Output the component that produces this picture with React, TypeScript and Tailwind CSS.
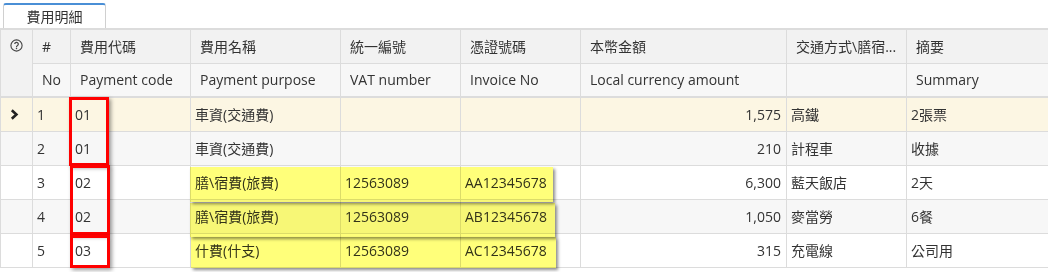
import React from "react";

const COLS = [32, 38, 120, 150, 120, 120, 206, 120, 142];

const ROWS = [
  { no: "1", code: "01", name: "車資(交通費)", vat: "", inv: "", amt: "1,575", way: "高鐵", note: "2張票" },
  { no: "2", code: "01", name: "車資(交通費)", vat: "", inv: "", amt: "210", way: "計程車", note: "收據" },
  { no: "3", code: "02", name: "膳\\宿費(旅費)", vat: "12563089", inv: "AA12345678", amt: "6,300", way: "藍天飯店", note: "2天" },
  { no: "4", code: "02", name: "膳\\宿費(旅費)", vat: "12563089", inv: "AB12345678", amt: "1,050", way: "麥當勞", note: "6餐" },
  { no: "5", code: "03", name: "什費(什支)", vat: "12563089", inv: "AC12345678", amt: "315", way: "充電線", note: "公司用" },
];

const head = "h-[34px] px-[9px] border border-[#dcdcdc] whitespace-nowrap overflow-hidden font-normal";
const cell = "h-[34px] px-[4px] border border-[#dcdcdc] whitespace-nowrap overflow-hidden";

export default function App() {
  return (
    <div
      className="w-[1048px] h-[272px] bg-white text-[14px] text-[#333] overflow-hidden"
      style={{ fontFamily: '"Open Sans", "Noto Sans CJK TC", sans-serif' }}
    >
      <div className="flex pl-[3px] pt-[3px]">
        <div className="w-[103px] h-[25px] rounded-t-[3px] border-t-2 border-x border-t-[#4a8fd6] border-x-[#d0d0d0] flex items-center justify-center text-[14px] text-[#333] bg-white">
          費用明細
        </div>
      </div>

      <div className="relative">
        <table className="table-fixed border-collapse w-[1047px] border-t-2 border-t-[#dcdcdc]">
          <colgroup>
            {COLS.map((w, i) => (
              <col key={i} style={{ width: w }} />
            ))}
          </colgroup>
          <thead>
            <tr className="bg-[#f2f2f2] text-left">
              <th rowSpan={2} className="border border-[#dcdcdc] align-top pt-[9px] font-normal bg-[#f2f2f2]">
                <div className="flex justify-center">
                  <svg width="13" height="13" viewBox="0 0 13 13">
                    <circle cx="6.5" cy="6.5" r="5.6" fill="none" stroke="#444" strokeWidth="1.1" />
                    <path d="M4.7 5.1a1.8 1.8 0 1 1 2.6 1.6c-.6.3-.8.6-.8 1.2v.3" fill="none" stroke="#444" strokeWidth="1.2" />
                    <circle cx="6.5" cy="9.6" r="0.75" fill="#444" />
                  </svg>
                </div>
              </th>
              <th className={head}>#</th>
              <th className={head}>費用代碼</th>
              <th className={head}>費用名稱</th>
              <th className={head}>統一編號</th>
              <th className={head}>憑證號碼</th>
              <th className={head}>本幣金額</th>
              <th className={head}>交通方式\膳宿...</th>
              <th className={head}>摘要</th>
            </tr>
            <tr className="bg-[#f7f7f7] text-left border-b-2 border-b-[#dcdcdc]">
              <th className={head}>No</th>
              <th className={head}>Payment code</th>
              <th className={head}>Payment purpose</th>
              <th className={head}>VAT number</th>
              <th className={head}>Invoice No</th>
              <th className={head}>Local currency amount</th>
              <th className={head}></th>
              <th className={head}>Summary</th>
            </tr>
          </thead>
          <tbody>
            {ROWS.map((r, i) => (
              <tr
                key={r.no}
                className={i === 0 ? "bg-[#fcf6e3]" : i % 2 === 1 ? "bg-[#f7f7f7]" : "bg-white"}
              >
                <td className="h-[34px] border border-[#dcdcdc]">
                  {i === 0 && (
                    <div className="flex justify-center pr-[4px]">
                      <svg width="9" height="11" viewBox="0 0 9 11">
                        <path d="M1.8 1.3 6.4 5.5 1.8 9.7" fill="none" stroke="#222" strokeWidth="2.6" />
                      </svg>
                    </div>
                  )}
                </td>
                <td className={cell}>{r.no}</td>
                <td className={cell}>{r.code}</td>
                <td className={cell}>{r.name}</td>
                <td className={cell}>{r.vat}</td>
                <td className={cell}>{r.inv}</td>
                <td className={`${cell} text-right !pr-[5px]`}>{r.amt}</td>
                <td className={cell}>{r.way}</td>
                <td className={cell}>{r.note}</td>
              </tr>
            ))}
          </tbody>
        </table>

        {/* highlighter annotations */}
        <div className="absolute left-[190px] top-[139px] w-[363px] h-[35px] bg-[#ffff7a] mix-blend-multiply shadow-[2px_2px_3px_rgba(0,0,0,0.45)]" />
        <div className="absolute left-[190px] top-[175px] w-[365px] h-[34px] bg-[#ffff7a] mix-blend-multiply shadow-[2px_2px_3px_rgba(0,0,0,0.45)]" />
        <div className="absolute left-[191px] top-[209px] w-[365px] h-[31px] bg-[#ffff7a] mix-blend-multiply shadow-[2px_2px_3px_rgba(0,0,0,0.45)]" />

        {/* red boxes */}
        <div className="absolute left-[69px] top-[69px] w-[40px] h-[69px] border-[3px] border-[#ff0000] shadow-[2px_2px_4px_rgba(0,0,0,0.4)]" />
        <div className="absolute left-[70px] top-[137px] w-[40px] h-[70px] border-[3px] border-[#ff0000] shadow-[2px_2px_4px_rgba(0,0,0,0.4)]" />
        <div className="absolute left-[70px] top-[207px] w-[40px] h-[33px] border-[3px] border-[#ff0000] shadow-[2px_2px_4px_rgba(0,0,0,0.4)]" />
      </div>
    </div>
  );
}
